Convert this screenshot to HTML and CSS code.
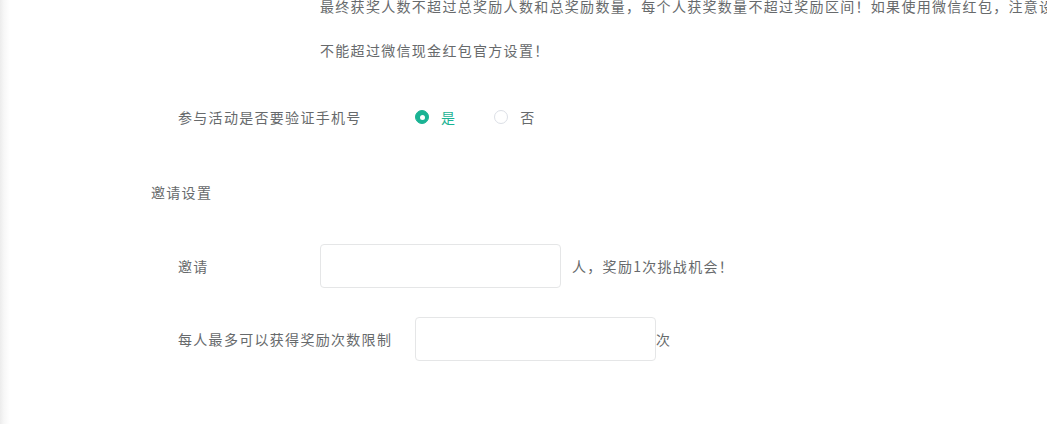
FILE: index.html
```html
<!DOCTYPE html>
<html lang="zh">
<head>
<meta charset="utf-8">
<title>邀请设置</title>
<link rel="stylesheet" href="styles.css">
</head>
<body>
<div class="page">
  <div class="card">
    <div class="notes">
      <div class="note-line">最终获奖人数不超过总奖励人数和总奖励数量，每个人获奖数量不超过奖励区间！如果使用微信红包，注意设置红包金额</div>
      <div class="note-line">不能超过微信现金红包官方设置！</div>
    </div>

    <div class="row row-radio">
      <div class="label label-wide">参与活动是否要验证手机号</div>
      <label class="radio-opt checked"><span class="radio"></span><span class="radio-text">是</span></label>
      <label class="radio-opt"><span class="radio"></span><span class="radio-text">否</span></label>
    </div>

    <div class="section-title">邀请设置</div>

    <div class="row row-invite">
      <div class="label label-narrow">邀请</div>
      <input class="field" type="text">
      <span class="suffix suffix-gap">人，奖励1次挑战机会！</span>
    </div>

    <div class="row row-limit">
      <div class="label label-wide">每人最多可以获得奖励次数限制</div>
      <input class="field" type="text">
      <span class="suffix">次</span>
    </div>
  </div>
</div>
</body>
</html>
```

FILE: styles.css
```css
html, body {
  margin: 0;
  padding: 0;
  height: 100%;
  overflow: hidden;
  background: #ffffff;
}
body {
  font-family: "Noto Sans CJK SC", "Noto Sans", "Liberation Sans", sans-serif;
  font-size: 14px;
  letter-spacing: 1.3px;
  color: #676a6c;
}
.page {
  height: 100%;
  display: flow-root;
  background: linear-gradient(to right, #ececec 0, #f7f7f7 4px, #ffffff 10px);
}
.card {
  display: flow-root;
  margin-left: 10px;
  height: 100%;
  background: #ffffff;
}
.notes {
  margin-top: -16px;
  padding-left: 310px;
  line-height: 44px;
  white-space: nowrap;
}
.row {
  display: flex;
  align-items: center;
  height: 44px;
  padding-left: 168px;
}
.label {
  flex: none;
  line-height: 20px;
}
.label-wide { width: 237px; }
.label-narrow { width: 142px; }
.row-radio { margin-top: 23px; }
.radio-opt {
  display: flex;
  align-items: center;
  gap: 12px;
  margin-right: 38px;
}
.radio {
  box-sizing: border-box;
  width: 14px;
  height: 14px;
  border-radius: 50%;
  border: 1px solid #dcdfe6;
  background: #fff;
  position: relative;
}
.checked .radio {
  border-color: #1ab394;
  background: #1ab394;
}
.checked .radio::after {
  content: "";
  position: absolute;
  left: 50%;
  top: 50%;
  width: 5px;
  height: 5px;
  margin: -2.5px 0 0 -2.5px;
  border-radius: 50%;
  background: #fff;
}
.checked .radio-text { color: #1ab394; }
.section-title {
  margin-top: 43px;
  padding-left: 141px;
  line-height: 20px;
}
.row-invite { margin-top: 42px; }
.row-limit { margin-top: 29px; }
.field {
  box-sizing: border-box;
  width: 241px;
  height: 44px;
  border: 1px solid #e5e6e7;
  border-radius: 4px;
  padding: 0 10px;
  font: inherit;
  outline: none;
  background: #fff;
}
.suffix { line-height: 20px; }
.suffix-gap { margin-left: 11px; }
```
